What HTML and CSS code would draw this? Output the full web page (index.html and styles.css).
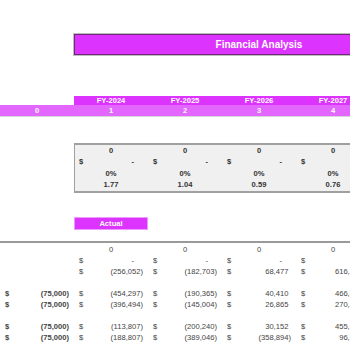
FILE: index.html
```html
<!DOCTYPE html>
<html>
<head>
<meta charset="utf-8">
<link rel="stylesheet" href="styles.css">
</head>
<body>
<div class="sheet">
  <div class="title">Financial Analysis</div>

  <div class="fy-row">
    <div class="c">FY-2024</div>
    <div class="c">FY-2025</div>
    <div class="c">FY-2026</div>
    <div class="c">FY-2027</div>
  </div>
  <div class="num-row">
    <div class="c">0</div>
    <div class="c">1</div>
    <div class="c">2</div>
    <div class="c">3</div>
    <div class="c">4</div>
  </div>

  <div class="box">
    <div class="row">
      <div class="c">0</div><div class="c">0</div><div class="c">0</div><div class="c">0</div>
    </div>
    <div class="row">
      <div class="acct dash"><span>$</span><span class="v">-</span></div>
      <div class="acct dash"><span>$</span><span class="v">-</span></div>
      <div class="acct dash"><span>$</span><span class="v">-</span></div>
      <div class="acct dash"><span>$</span><span class="v"></span></div>
    </div>
    <div class="row">
      <div class="c">0%</div><div class="c">0%</div><div class="c">0%</div><div class="c">0%</div>
    </div>
    <div class="row">
      <div class="c">1.77</div><div class="c">1.04</div><div class="c">0.59</div><div class="c">0.76</div>
    </div>
  </div>

  <div class="actual">Actual</div>

  <div class="data">
    <div class="row">
      <div></div>
      <div class="c">0</div><div class="c">0</div><div class="c">0</div><div class="c">0</div>
    </div>
    <div class="row">
      <div></div>
      <div class="acct dash"><span>$</span><span class="v">-</span></div>
      <div class="acct dash"><span>$</span><span class="v">-</span></div>
      <div class="acct dash"><span>$</span><span class="v">-</span></div>
      <div class="acct dash"><span>$</span><span class="v">-</span></div>
    </div>
    <div class="row">
      <div></div>
      <div class="acct"><span>$</span><span class="v">(256,052)</span></div>
      <div class="acct"><span>$</span><span class="v">(182,703)</span></div>
      <div class="acct pos"><span>$</span><span class="v">68,477</span></div>
      <div class="acct pos"><span>$</span><span class="v">616,210</span></div>
    </div>
    <div class="row blank"></div>
    <div class="row">
      <div class="acct bold"><span>$</span><span class="v">(75,000)</span></div>
      <div class="acct"><span>$</span><span class="v">(454,297)</span></div>
      <div class="acct"><span>$</span><span class="v">(190,365)</span></div>
      <div class="acct pos"><span>$</span><span class="v">40,410</span></div>
      <div class="acct pos"><span>$</span><span class="v">466,802</span></div>
    </div>
    <div class="row">
      <div class="acct bold"><span>$</span><span class="v">(75,000)</span></div>
      <div class="acct"><span>$</span><span class="v">(396,494)</span></div>
      <div class="acct"><span>$</span><span class="v">(145,004)</span></div>
      <div class="acct pos"><span>$</span><span class="v">26,865</span></div>
      <div class="acct pos"><span>$</span><span class="v">270,394</span></div>
    </div>
    <div class="row blank"></div>
    <div class="row">
      <div class="acct bold"><span>$</span><span class="v">(75,000)</span></div>
      <div class="acct"><span>$</span><span class="v">(113,807)</span></div>
      <div class="acct"><span>$</span><span class="v">(200,240)</span></div>
      <div class="acct pos"><span>$</span><span class="v">30,152</span></div>
      <div class="acct pos"><span>$</span><span class="v">455,617</span></div>
    </div>
    <div class="row">
      <div class="acct bold"><span>$</span><span class="v">(75,000)</span></div>
      <div class="acct"><span>$</span><span class="v">(188,807)</span></div>
      <div class="acct"><span>$</span><span class="v">(389,046)</span></div>
      <div class="acct"><span>$</span><span class="v">(358,894)</span></div>
      <div class="acct pos"><span>$</span><span class="v">96,723</span></div>
    </div>
  </div>
</div>
</body>
</html>
```
FILE: styles.css
```css
html, body {
  margin: 0;
  padding: 0;
  background: #ffffff;
  overflow: hidden;
}
body {
  width: 350px;
  height: 350px;
  font-family: "Liberation Sans", Arial, sans-serif;
  font-size: 7.6px;
  color: #333333;
}
.sheet {
  width: 444px;
  padding-top: 34px;
}
.c {
  text-align: center;
  white-space: nowrap;
}
.title {
  margin-left: 74px;
  width: 370px;
  height: 21px;
  box-sizing: border-box;
  background: #dd33ff;
  border: 1px solid #6e2a78;
  box-shadow: 0 0 0 1px #bdbdbd;
  color: #ffffff;
  font-weight: bold;
  font-size: 10px;
  line-height: 19px;
  text-align: center;
}
.fy-row {
  margin-top: 41px;
  margin-left: 74px;
  height: 9px;
  line-height: 9px;
  display: grid;
  grid-template-columns: repeat(4, 74px);
  background: #dd33ff;
  color: #ffffff;
  font-weight: bold;
}
.num-row {
  height: 11px;
  line-height: 11px;
  display: grid;
  grid-template-columns: repeat(5, 74px);
  background: #e366ff;
  color: #ffffff;
  font-weight: bold;
  border-bottom: 1px solid #d6d6d6;
}
.box {
  margin-top: 26px;
  margin-left: 74px;
  background: #f0f0f0;
  border-top: 2px solid #a0a0a0;
  border-bottom: 2px solid #a0a0a0;
  border-left: 1px solid #a0a0a0;
  font-weight: bold;
  color: #333333;
  padding: 0 0 1px 0;
}
.row {
  display: grid;
  grid-template-columns: repeat(5, 74px);
  height: 11px;
  line-height: 11px;
}
.box .row {
  grid-template-columns: repeat(4, 74px);
  height: 11.25px;
  line-height: 11.25px;
  margin-left: -1px;
}
.acct {
  display: flex;
  justify-content: space-between;
  padding: 0 5px;
  white-space: nowrap;
}
.acct.pos .v {
  padding-right: 2.6px;
}
.acct.dash .v {
  padding-right: 9px;
}
.bold {
  font-weight: bold;
}
.actual {
  margin-top: 24px;
  margin-left: 74px;
  width: 74px;
  height: 13px;
  box-sizing: border-box;
  background: #dd33ff;
  border: 1px solid #ee99ff;
  color: #ffffff;
  font-weight: bold;
  line-height: 11px;
  text-align: center;
}
.data {
  margin-top: 11px;
  border-top: 2px solid #9a9a9a;
  padding-top: 1px;
  color: #444444;
}
```
